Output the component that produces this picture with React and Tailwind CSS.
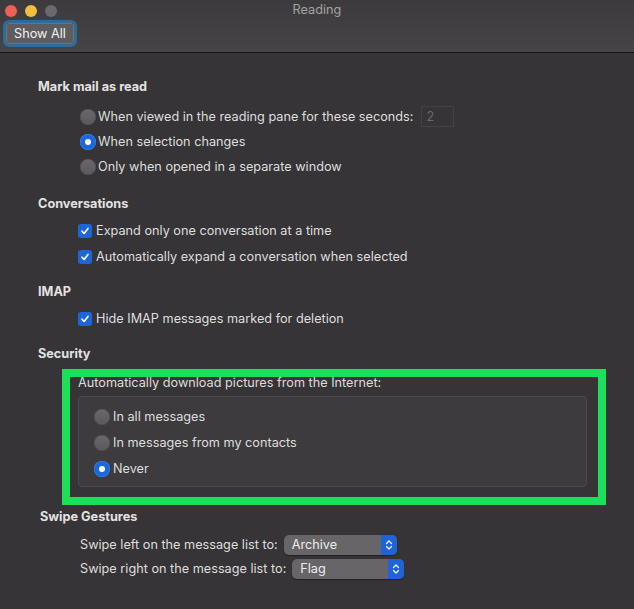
import React from 'react';

const font = { fontFamily: 'Inter, "Liberation Sans", Arial, sans-serif' };

const Radio = ({ checked }) =>
  checked ? (
    <span className="flex h-4 w-4 shrink-0 items-center justify-center rounded-full bg-[#1b68dc] shadow-[inset_0_0_0_0.5px_#3f86f0]">
      <span className="h-[6px] w-[6px] rounded-full bg-white" />
    </span>
  ) : (
    <span className="h-4 w-4 shrink-0 rounded-full bg-gradient-to-b from-[#6a686a] to-[#5a585a] shadow-[inset_0_0_0_0.5px_#4a484a]" />
  );

const Checkbox = () => (
  <span className="flex h-[14px] w-[14px] shrink-0 items-center justify-center rounded-[3px] bg-[#1e66d8]">
    <svg width="10" height="10" viewBox="0 0 10 10" fill="none">
      <path d="M2 5.2 L4.1 7.4 L8 2.4" stroke="white" strokeWidth="1.6" strokeLinecap="round" strokeLinejoin="round" />
    </svg>
  </span>
);

const Popup = ({ value, width }) => (
  <div className={`flex h-[20px] ${width} items-stretch overflow-hidden rounded-[5px] bg-[#676567] shadow-[0_0.5px_1px_rgba(0,0,0,0.4)]`}>
    <span className="flex-1 pl-2 text-[12.7px] leading-[20px] text-[#ececec]">{value}</span>
    <span className="flex w-[16px] items-center justify-center bg-[#1f64d6]">
      <svg width="8" height="12" viewBox="0 0 8 12" fill="none">
        <path d="M1.5 4.5 L4 2 L6.5 4.5 M1.5 7.5 L4 10 L6.5 7.5" stroke="white" strokeWidth="1.2" strokeLinecap="round" strokeLinejoin="round" />
      </svg>
    </span>
  </div>
);

const Heading = ({ children, className = '' }) => (
  <div className={`h-4 text-[12.7px] font-bold leading-4 text-[#e2e2e2] ${className}`}>{children}</div>
);

export default function App() {
  return (
    <div className="h-[609px] w-[634px] overflow-hidden bg-[#363436] text-[12.7px] text-[#dedede]" style={font}>
      {/* Title bar */}
      <div className="h-[53px] border-b border-[#141414] bg-gradient-to-b from-[#3c3a3c] to-[#464446]">
        <div className="grid h-[20px] grid-cols-3 items-center">
          <div className="flex items-center gap-2 pl-[5px] pt-[1px]">
            <span className="h-3 w-3 rounded-full bg-[#ee5f57]" />
            <span className="h-3 w-3 rounded-full bg-[#f5bd3f]" />
            <span className="h-3 w-3 rounded-full bg-[#6b696b]" />
          </div>
          <div className="text-center text-[12.7px] leading-4 text-[#a3a3a3]">Reading</div>
          <div />
        </div>
        <div className="ml-[3px] inline-flex rounded-[6px] border-[3px] border-[#2b6c9f]">
          <span className="rounded-[3px] border border-[#737173] bg-[#5e5c5e] px-[7px] text-[12.7px] leading-[19px] text-[#f2f2f2]">
            Show All
          </span>
        </div>
      </div>

      {/* Content */}
      <div className="pl-[38px] pt-[26px]">
        <Heading>Mark mail as read</Heading>
        <div className="mt-[9px] pl-[42px]">
          <div className="flex h-[25px] items-center gap-[2px]">
            <Radio />
            <span>When viewed in the reading pane for these seconds:</span>
            <span className="ml-[6px] h-[21px] w-[33px] border border-[#444244] bg-[#363436] pl-[4px] leading-[20px] text-[#6c6a6c]">2</span>
          </div>
          <div className="flex h-[25px] items-center gap-[2px]">
            <Radio checked />
            <span>When selection changes</span>
          </div>
          <div className="flex h-[25px] items-center gap-[2px]">
            <Radio />
            <span>Only when opened in a separate window</span>
          </div>
        </div>

        <Heading className="mt-[17px]">Conversations</Heading>
        <div className="mt-[6px] pl-[40px]">
          <div className="flex h-[26px] items-center gap-[4px]">
            <Checkbox />
            <span>Expand only one conversation at a time</span>
          </div>
          <div className="flex h-[26px] items-center gap-[4px]">
            <Checkbox />
            <span>Automatically expand a conversation when selected</span>
          </div>
        </div>

        <Heading className="mt-[14px]">IMAP</Heading>
        <div className="mt-[6px] pl-[40px]">
          <div className="flex h-[26px] items-center gap-[4px]">
            <Checkbox />
            <span>Hide IMAP messages marked for deletion</span>
          </div>
        </div>

        <Heading className="mt-[14px]">Security</Heading>

        <div className="ml-[24px] mt-[7px] h-[136px] w-[544px] overflow-hidden border-[8px] border-[#1ddf5c]">
          <div className="-mt-[1px] pl-[8px] leading-[14px] text-[#dcdcdc]">
            Automatically download pictures from the Internet:
          </div>
          <div className="ml-[8px] mt-[6px] h-[91px] w-[509px] rounded-[4px] border border-[#4c4a4c] bg-[#3d3b3d] pl-[15px] pt-[7px]">
            <div className="flex h-[26px] items-center gap-[3px]">
              <Radio />
              <span>In all messages</span>
            </div>
            <div className="flex h-[26px] items-center gap-[3px]">
              <Radio />
              <span>In messages from my contacts</span>
            </div>
            <div className="flex h-[26px] items-center gap-[3px]">
              <Radio checked />
              <span>Never</span>
            </div>
          </div>
        </div>

        <Heading className="ml-[2px] mt-[4px]">Swipe Gestures</Heading>
        <div className="mt-[8px] pl-[42px]">
          <div className="flex h-[24px] items-center gap-[6px]">
            <span>Swipe left on the message list to:</span>
            <Popup value="Archive" width="w-[113px]" />
          </div>
          <div className="flex h-[24px] items-center gap-[6px]">
            <span>Swipe right on the message list to:</span>
            <Popup value="Flag" width="w-[112px]" />
          </div>
        </div>
      </div>
    </div>
  );
}
